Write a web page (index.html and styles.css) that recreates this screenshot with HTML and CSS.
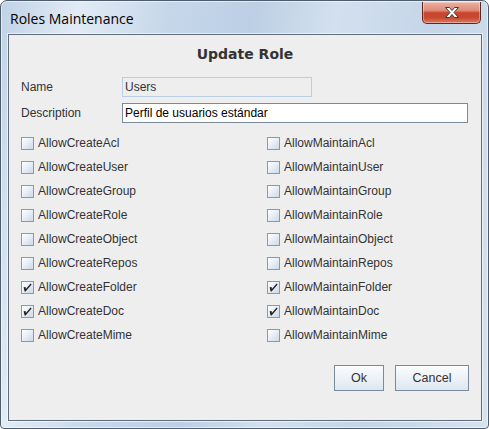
FILE: index.html
```html
<!DOCTYPE html>
<html>
<head>
<meta charset="utf-8">
<link rel="stylesheet" href="styles.css">
</head>
<body>
<div class="window">
  <div class="titlebar">
    <span class="title">Roles Maintenance</span>
    <div class="close">
      <svg width="18" height="13" viewBox="0 0 18 13"><path d="M2.5 1.5 H6.5 L9 4.5 L11.5 1.5 H15.5 L11 6.5 L15.5 11.5 H11.5 L9 8.5 L6.5 11.5 H2.5 L7 6.5 Z" fill="#ffffff" stroke="#3a3a3a" stroke-width="1" stroke-linejoin="round"/></svg>
    </div>
  </div>
  <div class="client">
    <div class="heading">Update Role</div>
    <div class="row">
      <span class="label">Name</span>
      <div class="field field-disabled">Users</div>
    </div>
    <div class="row row-desc">
      <span class="label">Description</span>
      <div class="field field-desc">Perfil de usuarios estándar</div>
    </div>
    <div class="grid">
      <div class="cb"><span class="box"></span>AllowCreateAcl</div>
      <div class="cb"><span class="box"></span>AllowMaintainAcl</div>
      <div class="cb"><span class="box"></span>AllowCreateUser</div>
      <div class="cb"><span class="box"></span>AllowMaintainUser</div>
      <div class="cb"><span class="box"></span>AllowCreateGroup</div>
      <div class="cb"><span class="box"></span>AllowMaintainGroup</div>
      <div class="cb"><span class="box"></span>AllowCreateRole</div>
      <div class="cb"><span class="box"></span>AllowMaintainRole</div>
      <div class="cb"><span class="box"></span>AllowCreateObject</div>
      <div class="cb"><span class="box"></span>AllowMaintainObject</div>
      <div class="cb"><span class="box"></span>AllowCreateRepos</div>
      <div class="cb"><span class="box"></span>AllowMaintainRepos</div>
      <div class="cb"><span class="box"><svg width="11" height="11" viewBox="0 0 11 11"><path d="M1.6 5.2 L3.6 5.0 L3.9 6.9 L8.6 1.6 L9.6 2.6 L3.6 9.4 L2.6 9.4 Z" fill="#222"/></svg></span>AllowCreateFolder</div>
      <div class="cb"><span class="box"><svg width="11" height="11" viewBox="0 0 11 11"><path d="M1.6 5.2 L3.6 5.0 L3.9 6.9 L8.6 1.6 L9.6 2.6 L3.6 9.4 L2.6 9.4 Z" fill="#222"/></svg></span>AllowMaintainFolder</div>
      <div class="cb"><span class="box"><svg width="11" height="11" viewBox="0 0 11 11"><path d="M1.6 5.2 L3.6 5.0 L3.9 6.9 L8.6 1.6 L9.6 2.6 L3.6 9.4 L2.6 9.4 Z" fill="#222"/></svg></span>AllowCreateDoc</div>
      <div class="cb"><span class="box"><svg width="11" height="11" viewBox="0 0 11 11"><path d="M1.6 5.2 L3.6 5.0 L3.9 6.9 L8.6 1.6 L9.6 2.6 L3.6 9.4 L2.6 9.4 Z" fill="#222"/></svg></span>AllowMaintainDoc</div>
      <div class="cb"><span class="box"></span>AllowCreateMime</div>
      <div class="cb"><span class="box"></span>AllowMaintainMime</div>
    </div>
    <div class="buttons">
      <div class="btn btn-ok">Ok</div>
      <div class="btn btn-cancel">Cancel</div>
    </div>
  </div>
</div>
</body>
</html>
```

FILE: styles.css
```css
html, body {
  margin: 0;
  padding: 0;
  background: #ffffff;
}

.window {
  width: 489px;
  height: 429px;
  box-sizing: border-box;
  border: 1px solid #4d5d6e;
  border-radius: 7px 7px 4px 4px;
  padding: 0 6px 7px 7px;
  display: flex;
  flex-direction: column;
  background: linear-gradient(100deg, #c0d2e6 0%, #e2ebf5 14%, #c6d7ea 30%, #bccfe4 45%, #d3e0ee 60%, #c4d5e8 78%, #d6e2ef 100%);
  box-shadow: inset 0 0 0 1px rgba(255,255,255,0.55);
}

.titlebar {
  height: 33px;
  display: flex;
  align-items: flex-start;
  flex-shrink: 0;
}

.title {
  font-family: "Open Sans", "Noto Sans", sans-serif;
  font-size: 14px;
  color: #000000;
  padding-left: 2px;
  margin-top: 8px;
  line-height: 20px;
}

.close {
  margin-left: auto;
  margin-right: 1px;
  margin-top: 1px;
  width: 59px;
  height: 22px;
  box-sizing: border-box;
  border: 1px solid #5a2a22;
  border-top: none;
  border-radius: 0 0 5px 5px;
  background: linear-gradient(#eab0a2 0%, #de8c78 40%, #c9442b 52%, #c94930 75%, #dd7c62 100%);
  box-shadow: inset 0 0 0 1px rgba(255,255,255,0.35);
  display: flex;
  align-items: center;
  justify-content: center;
}

.close svg {
  display: block;
}

.client {
  flex: 1;
  border: 1px solid #5f6c7a;
  background: #eeeeee;
  box-shadow: 0 0 0 1px rgba(255,255,255,0.6);
  display: flex;
  flex-direction: column;
  padding-left: 12px;
  font-family: "Liberation Sans", Arial, sans-serif;
  font-size: 12px;
  color: #333333;
}

.heading {
  margin-top: 9px;
  height: 20px;
  line-height: 20px;
  text-align: center;
  font-family: "DejaVu Sans", sans-serif;
  font-weight: bold;
  font-size: 14px;
  color: #333333;
  margin-left: -12px;
}

.row {
  display: flex;
  align-items: center;
  height: 20px;
  margin-top: 13px;
}

.row-desc {
  margin-top: 6px;
}

.label {
  width: 101px;
  flex-shrink: 0;
}

.field {
  height: 20px;
  box-sizing: border-box;
  line-height: 18px;
  padding-left: 2px;
}

.field-disabled {
  width: 190px;
  border: 1px solid #b8cfe5;
  background: #eeeeee;
  color: #333333;
}

.field-desc {
  width: 346px;
  border: 1px solid #7a8a99;
  background: #ffffff;
  color: #000000;
}

.grid {
  margin-top: 8px;
  display: grid;
  grid-template-columns: 246px auto;
  grid-auto-rows: 24px;
}

.cb {
  display: flex;
  align-items: center;
}

.box {
  width: 13px;
  height: 13px;
  box-sizing: border-box;
  border: 1px solid #8b9aa9;
  background: linear-gradient(135deg, #ffffff 0%, #eef3f8 35%, #cbd9e8 100%);
  margin-right: 4px;
  display: flex;
  align-items: center;
  justify-content: center;
}

.box svg {
  display: block;
}

.buttons {
  margin-top: 18px;
  display: flex;
  justify-content: flex-end;
  gap: 11px;
  margin-right: 12px;
}

.btn {
  height: 26px;
  box-sizing: border-box;
  border: 1px solid #7a8a99;
  background: linear-gradient(#fbfcfd 0%, #eef3f8 45%, #dce7f2 100%);
  display: flex;
  align-items: center;
  justify-content: center;
  color: #333333;
  font-size: 12.5px;
}

.btn-ok {
  width: 50px;
}

.btn-cancel {
  width: 74px;
}
```
